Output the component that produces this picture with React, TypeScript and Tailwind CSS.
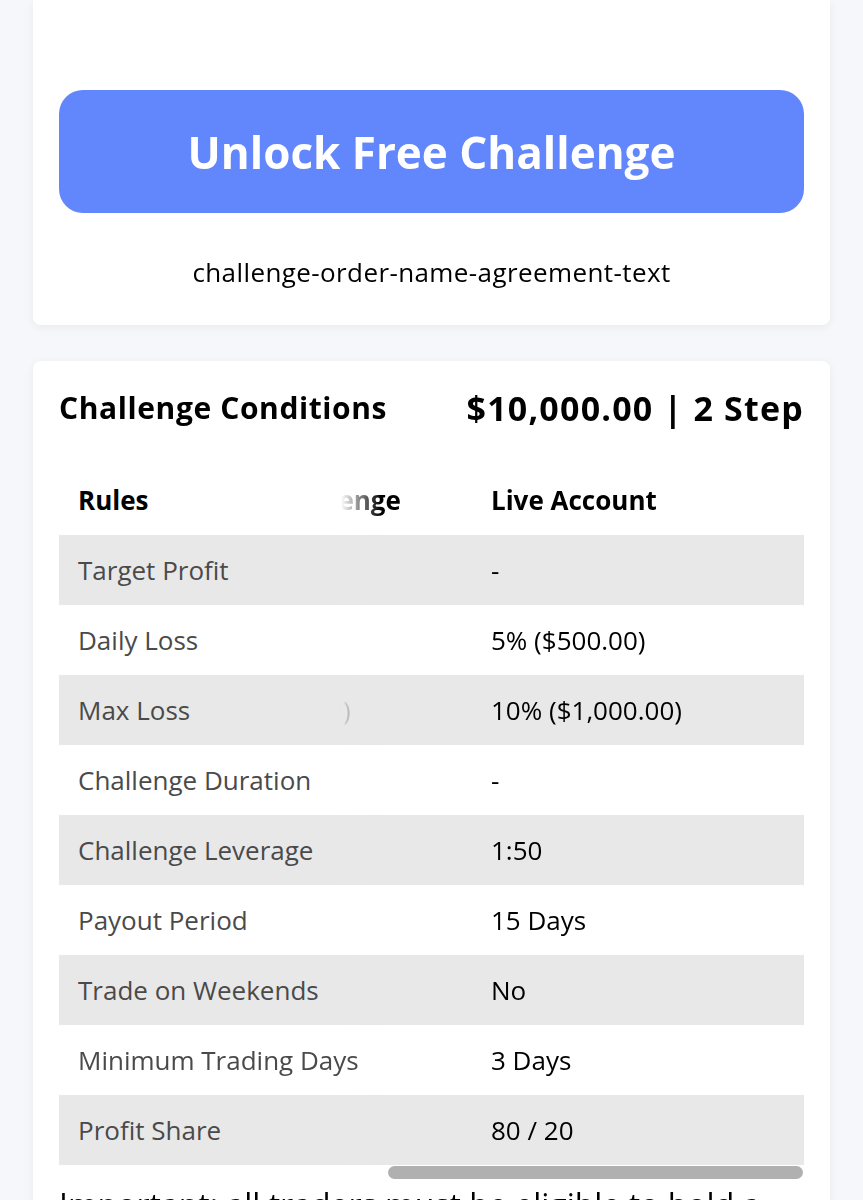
import React from "react";

type Row = {
  rule: string;
  first: string;
  second: string;
  live: string;
};

const rows: Row[] = [
  { rule: "Target Profit", first: "8% ($800.00)", second: "5%", live: "-" },
  { rule: "Daily Loss", first: "5% ($500.00)", second: "5%", live: "5% ($500.00)" },
  { rule: "Max Loss", first: "10% ($1,000.00)", second: "10% ($800)", live: "10% ($1,000.00)" },
  { rule: "Challenge Duration", first: "Unlimited", second: "-", live: "-" },
  { rule: "Challenge Leverage", first: "1:50", second: "1:50", live: "1:50" },
  { rule: "Payout Period", first: "-", second: "-", live: "15 Days" },
  { rule: "Trade on Weekends", first: "No", second: "No", live: "No" },
  { rule: "Minimum Trading Days", first: "3 Days", second: "3 Days", live: "3 Days" },
  { rule: "Profit Share", first: "-", second: "-", live: "80 / 20" },
];

const font = { fontFamily: "'Open Sans', Roboto, sans-serif" };

const RuleCell = ({ children, gray, head }: { children: React.ReactNode; gray: boolean; head?: boolean }) => (
  <div
    className={
      "sticky left-0 z-10 flex w-[272px] shrink-0 items-center whitespace-nowrap pl-[19px] after:absolute after:left-full after:top-0 after:h-full after:w-[50px] after:bg-linear-to-r after:from-20% after:to-transparent " +
      (gray ? "bg-[#e8e8e8] after:from-[#e8e8e8] " : "bg-white after:from-white ") +
      (head ? "font-bold text-black" : "text-[#4a4a4a]")
    }
  >
    <span className="relative z-20">{children}</span>
  </div>
);

export default function App() {
  return (
    <div className="min-h-[1200px] bg-[#f6f7fb] px-[33px] pb-10" style={font}>
      <div className="rounded-b-lg bg-white px-[26px] pb-[37px] pt-[90px] shadow-[0_2px_10px_rgba(0,0,0,0.06)]">
        <button className="flex h-[123px] w-full items-center justify-center rounded-[24px] bg-[#6286fb] text-[44px] font-bold text-white">
          Unlock Free Challenge
        </button>
        <p className="mt-[43px] text-center text-[26px] leading-[32px] tracking-[0.4px] text-black">
          challenge-order-name-agreement-text
        </p>
      </div>

      <div className="mt-[36px] rounded-lg bg-white px-[26px] pt-[27px] shadow-[0_2px_10px_rgba(0,0,0,0.06)]">
        <div className="flex items-center justify-between leading-[40px] text-black">
          <h2 className="text-[30px] font-bold tracking-[0.6px]">Challenge Conditions</h2>
          <div className="text-[34px] font-bold tracking-[1.2px]">$10,000.00 | 2 Step</div>
        </div>

        <div className="mt-[37px] overflow-x-auto [direction:rtl] [scrollbar-width:none]">
          <div className="w-max text-[26px] [direction:ltr]">
            <div className="flex h-[70px] bg-white">
              <RuleCell gray={false} head>
                Rules
              </RuleCell>
              <div className="flex w-[330px] shrink-0 items-center pl-[19px] font-bold">1st Challenge</div>
              <div className="flex w-[273px] shrink-0 items-center whitespace-nowrap pl-[19px] font-bold">
                2nd Challenge
              </div>
              <div className="flex w-[332px] shrink-0 items-center pl-[19px] font-bold">Live Account</div>
            </div>
            {rows.map((r, i) => {
              const gray = i % 2 === 0;
              return (
                <div key={r.rule} className={"flex h-[70px] text-black " + (gray ? "bg-[#e8e8e8]" : "bg-white")}>
                  <RuleCell gray={gray}>{r.rule}</RuleCell>
                  <div className="flex w-[330px] shrink-0 items-center whitespace-nowrap pl-[19px]">{r.first}</div>
                  <div className="flex w-[273px] shrink-0 items-center whitespace-nowrap pl-[19px]">{r.second}</div>
                  <div className="flex w-[332px] shrink-0 items-center whitespace-nowrap pl-[19px]">{r.live}</div>
                </div>
              );
            })}
          </div>
        </div>
        <div className="mt-px h-[13px] w-full">
          <div className="ml-[329px] h-full w-[415px] rounded-full bg-[#b0b0b0]" />
        </div>

        <p className="mt-[6px] pb-6 text-[32px] leading-[40px] text-black">
          Important: all traders must be eligible to hold a challenge account.
        </p>
      </div>
    </div>
  );
}
